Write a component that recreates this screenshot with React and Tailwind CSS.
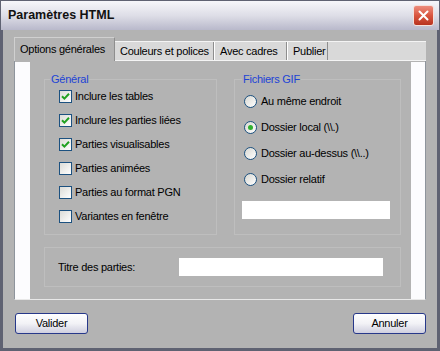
import React from "react";

function Check({ checked }) {
  return (
    <span className="w-[13px] h-[13px] border border-[#1c5180] bg-gradient-to-br from-[#dcdcd7] to-[#ffffff] flex items-center justify-center shrink-0">
      {checked && (
        <svg width="9" height="9" viewBox="0 0 9 9">
          <path d="M1 4.2 L3.4 6.6 L8 1.8" stroke="#21a121" strokeWidth="2" fill="none" />
        </svg>
      )}
    </span>
  );
}

function Radio({ checked }) {
  return (
    <span className="w-[13px] h-[13px] rounded-full border border-[#1c5180] bg-gradient-to-br from-[#d8d8d2] to-[#ffffff] flex items-center justify-center shrink-0">
      {checked && <span className="w-[5px] h-[5px] rounded-full bg-[#2fb02f]" />}
    </span>
  );
}

function Btn({ children }) {
  return (
    <button className="w-[73px] h-[21px] rounded-[3px] border border-[#27388a] bg-gradient-to-b from-[#ffffff] via-[#f2f2f6] to-[#cfcfdf] text-[11px] text-black flex items-center justify-center">
      {children}
    </button>
  );
}

export default function App() {
  const checks = [
    ["Inclure les tables", true],
    ["Inclure les parties liées", true],
    ["Parties visualisables", true],
    ["Parties animées", false],
    ["Parties au format PGN", false],
    ["Variantes en fenêtre", false],
  ];
  const radios = [
    ["Au même endroit", false],
    ["Dossier local (\\\\.)", true],
    ["Dossier au-dessus (\\\\..)", false],
    ["Dossier relatif", false],
  ];
  return (
    <div className="w-[440px] h-[351px] flex flex-col font-[family-name:'Liberation_Sans',Arial,sans-serif] tracking-[-0.25px] text-black bg-[#5f6272]">
      {/* Title bar */}
      <div className="h-[30px] flex items-center justify-between pl-[7px] pr-[5px] bg-gradient-to-b from-[#f6f6fa] via-[#dedee7] to-[#b9b9cb] border-t border-l border-r border-[#5f6272]">
        <span className="text-[12.5px] font-bold text-[#111] leading-none tracking-normal">Paramètres HTML</span>
        <span className="w-[21px] h-[21px] rounded-[3px] border border-[#f4e0dc] bg-gradient-to-b from-[#ec8b7c] via-[#d9553f] to-[#b8321f] flex items-center justify-center">
          <svg width="11" height="11" viewBox="0 0 11 11">
            <path d="M1.5 1.5 L9.5 9.5 M9.5 1.5 L1.5 9.5" stroke="#ffffff" strokeWidth="2" strokeLinecap="round" />
          </svg>
        </span>
      </div>
      {/* Body */}
      <div className="flex-1 mx-[3px] mb-[3px] bg-[#b3b3b3] flex flex-col pt-[7px] px-[11px]">
        {/* Tab row */}
        <div className="flex items-end h-[24px] -mb-px relative z-10">
          <div className="h-[24px] w-[101px] bg-[#b3b3b3] border-t border-l border-[#d0d0d0] border-r border-r-[#8e8e8e] text-[11px] pl-[5px] pt-[6px] leading-none whitespace-nowrap">
            Options générales
          </div>
          <div className="h-[20px] flex-1 bg-[#d9d9d9] border-t border-[#f4f4f4] border-b border-b-[#f4f4f4] flex items-stretch text-[11px] whitespace-nowrap">
            <div className="w-[99px] border-r border-r-[#8e8e8e] pl-[5px] pt-[4px] leading-none">Couleurs et polices</div>
            <div className="w-[73px] border-l border-l-[#ffffff] border-r border-r-[#8e8e8e] pl-[5px] pt-[4px] leading-none">Avec cadres</div>
            <div className="w-[41px] border-l border-l-[#ffffff] border-r border-r-[#8e8e8e] pl-[5px] pt-[4px] leading-none">Publier</div>
            <div className="flex-1" />
          </div>
        </div>
        {/* Pane */}
        <div className="h-[240px] border-l border-r border-[#8e949c] border-b border-b-[#e8e8e8] flex pt-[2px] bg-[#b3b3b3]">
          <div className="w-[15px] bg-[#fcfcfe]" />
          <div className="flex-1 bg-[#b3b3b3] flex flex-col pl-[14px] pr-[10px] pt-[12px] text-[11px]">
            <div className="flex gap-[17px]">
              <fieldset className="w-[173px] h-[161px] border border-[#bebebe] p-0">
                <legend className="ml-[5px] px-px text-[#2143d6] text-[11px] leading-none">Général</legend>
                <div className="flex flex-col gap-[11px] pl-[14px] pt-[5px]">
                  {checks.map(([t, c]) => (
                    <div key={t} className="flex items-center gap-[3px] h-[13px]">
                      <Check checked={c} />
                      <span className="leading-none whitespace-nowrap">{t}</span>
                    </div>
                  ))}
                </div>
              </fieldset>
              <fieldset className="w-[167px] h-[161px] border border-[#bebebe] p-0">
                <legend className="ml-[7px] px-px text-[#2143d6] text-[11px] leading-none">Fichiers GIF</legend>
                <div className="pl-[9px] pt-[10px]">
                  <div className="flex flex-col gap-[13px]">
                    {radios.map(([t, c]) => (
                      <div key={t} className="flex items-center gap-[4px] h-[13px]">
                        <Radio checked={c} />
                        <span className="leading-none whitespace-nowrap">{t}</span>
                      </div>
                    ))}
                  </div>
                  <div className="ml-[-2px] mt-[15px] w-[148px] h-[18px] bg-white" />
                </div>
              </fieldset>
            </div>
            <div className="mt-[12px] h-[40px] border border-[#bebebe] flex items-center pl-[13px]">
              <span className="w-[121px] leading-none">Titre des parties:</span>
              <div className="w-[204px] h-[18px] bg-white" />
            </div>
          </div>
          <div className="w-[14px] bg-[#fcfcfe]" />
        </div>
        {/* Buttons */}
        <div className="flex justify-between mt-[13px] pl-px pr-0">
          <Btn>Valider</Btn>
          <Btn>Annuler</Btn>
        </div>
      </div>
    </div>
  );
}
